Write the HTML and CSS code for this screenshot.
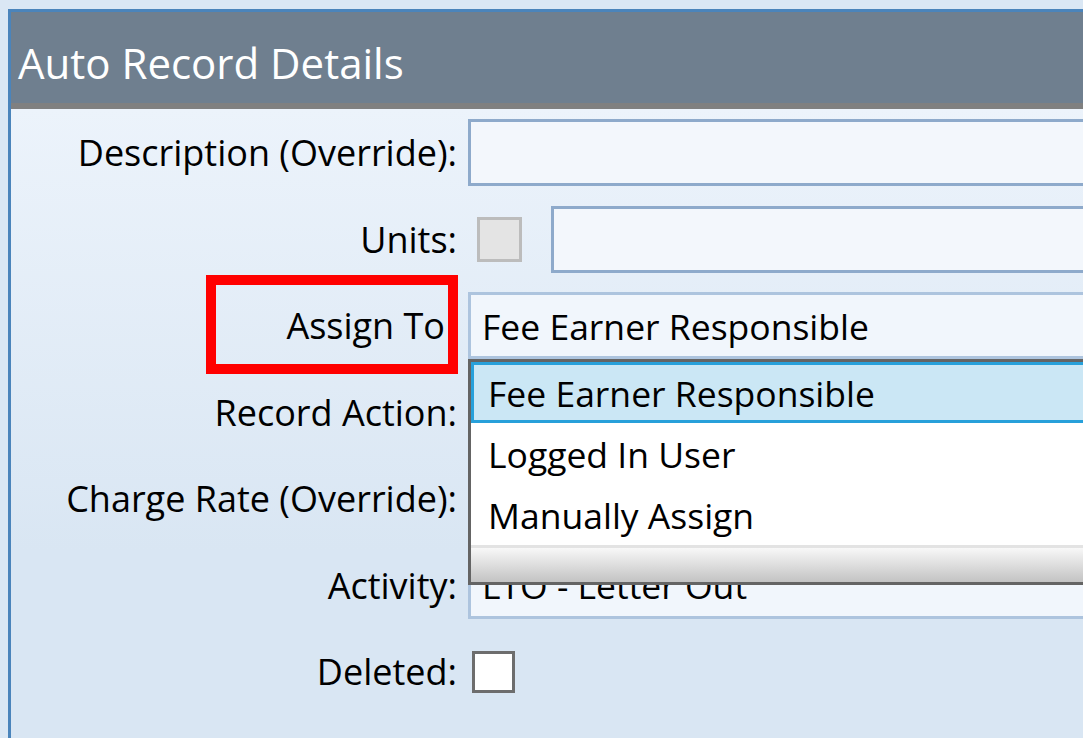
FILE: index.html
```html
<!DOCTYPE html>
<html lang="en">

<head>
    <meta charset="UTF-8">
    <meta name="viewport" content="width=device-width, initial-scale=1.0">
    <title>Auto Record Details</title>
    <link rel="stylesheet" href="styles.css">
</head>

<body>
    <div class="panel">
        <div class="panel-head">Auto Record Details</div>

        <div class="panel-body">
            <form class="fields">
                <label class="field-label">Description (Override):</label>
                <div class="field">
                    <input type="text" class="text-box" name="description">
                </div>

                <label class="field-label">Units:</label>
                <div class="field units">
                    <input type="checkbox" class="check check-off" disabled>
                    <input type="text" class="text-box" name="units">
                </div>

                <label class="field-label assign">
                    Assign To
                    <span class="mark"></span>
                </label>
                <div class="field">
                    <div class="combo">Fee Earner Responsible</div>

                    <ul class="dropdown">
                        <li class="selected">Fee Earner Responsible</li>
                        <li>Logged In User</li>
                        <li>Manually Assign</li>
                        <li class="grip"></li>
                    </ul>
                </div>

                <label class="field-label">Record Action:</label>
                <div class="field">
                    <div class="combo">Create Time Record</div>
                </div>

                <label class="field-label">Charge Rate (Override):</label>
                <div class="field">
                    <input type="text" class="text-box" name="rate">
                </div>

                <label class="field-label">Activity:</label>
                <div class="field">
                    <div class="combo">LTO - Letter Out</div>
                </div>

                <label class="field-label">Deleted:</label>
                <div class="field">
                    <input type="checkbox" class="check" name="deleted">
                </div>
            </form>
        </div>
    </div>
</body>

</html>
```

FILE: styles.css
```css
html,
body {
    margin: 0;
    height: 100%;
    overflow: hidden;
}

body {
    background-color: #dae7f4;
    font-family: "Open Sans", "Noto Sans", sans-serif;
    padding: 9px 0 0 8px;
    box-sizing: border-box;
}

.panel {
    width: 1200px;
    height: 100%;
    border-top: 3px solid #4a84bb;
    border-left: 3px solid #4a84bb;
    box-sizing: border-box;
}

.panel-head {
    height: 97px;
    display: flex;
    align-items: center;
    padding: 10px 0 0 7px;
    background-color: #6f7f8f;
    border-bottom: 6px solid #808080;
    box-sizing: border-box;
    color: #ffffff;
    font-size: 42px;
}

.panel-body {
    height: 100%;
    padding-top: 10px;
    background: linear-gradient(#ecf3fb, #d9e6f3 60%);
}

.fields {
    display: grid;
    grid-template-columns: 446px 700px;
    grid-auto-rows: 67px;
    column-gap: 11px;
    row-gap: 19.5px;
}

.field-label {
    display: flex;
    align-items: center;
    justify-content: flex-end;
    font-size: 36px;
    color: #000000;
}

.assign {
    position: relative;
    padding-right: 12px;
}

.mark {
    position: absolute;
    right: -1px;
    top: -17px;
    width: 252px;
    height: 99px;
    border: 10px solid #ff0000;
    box-sizing: border-box;
}

.field {
    position: relative;
    display: flex;
    align-items: center;
}

.text-box {
    width: 100%;
    height: 100%;
    margin: 0;
    border: 3px solid #8eaacb;
    background-color: #f3f7fc;
    box-sizing: border-box;
}

.units .text-box {
    margin-left: 29px;
}

.check {
    appearance: none;
    flex: none;
    width: 43px;
    height: 42px;
    margin: 0 0 0 4px;
    border: 3px solid #6d6d6d;
    background-color: #ffffff;
}

.check-off {
    margin-left: 9px;
    width: 45px;
    height: 45px;
    border-color: #bcbcbc;
    background-color: #e4e4e4;
}

.combo {
    width: 100%;
    height: 100%;
    display: flex;
    align-items: center;
    padding-left: 11px;
    border: 3px solid #adc4de;
    background-color: #f1f6fc;
    box-sizing: border-box;
    font-size: 35.5px;
}

.dropdown {
    position: absolute;
    top: 100%;
    left: 0;
    width: 100%;
    height: 226px;
    margin: 0;
    padding: 0;
    list-style: none;
    border: 3px solid #646464;
    background-color: #ffffff;
    box-sizing: border-box;
    font-size: 35.5px;
    z-index: 2;
}

.dropdown li {
    height: 61px;
    display: flex;
    align-items: center;
    padding-left: 17px;
    box-sizing: border-box;
}

.dropdown .selected {
    padding-left: 14px;
    border: 3px solid #27a0da;
    background-color: #cbe7f5;
}

.dropdown .grip {
    height: 37px;
    border-top: 3px solid #e3e3e3;
    background: linear-gradient(#f8f8f8, #c3c3c3);
}
```
